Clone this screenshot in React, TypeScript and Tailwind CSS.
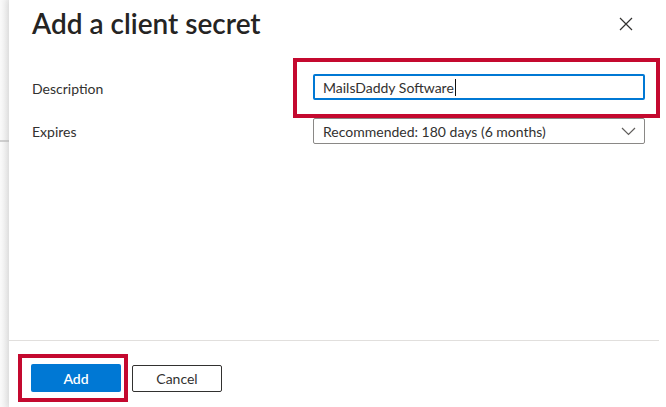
export default function App() {
  return (
    <div
      className="flex h-[407px] w-[666px] overflow-hidden bg-white text-[#323130]"
      style={{ fontFamily: "Lato, 'Noto Sans', sans-serif" }}
    >
      {/* blurred page behind the panel */}
      <div className="flex w-[9px] flex-col bg-gradient-to-r from-[#fafafa] to-[#ececec]">
        <div className="h-[140px]" />
        <div className="h-[2px] bg-[#cfcfcf]" />
      </div>

      <div className="flex flex-1 flex-col shadow-[-2px_0_6px_rgba(0,0,0,0.08)]">
        <div className="flex items-start justify-between pl-[23px] pr-[33px] pt-[5px]">
          <h1 className="text-[28px] font-semibold leading-[36px] text-[#252423]">Add a client secret</h1>
          <svg className="mt-[12px]" width="14" height="14" viewBox="0 0 14 14" fill="none">
            <path d="M1 1L13 13M13 1L1 13" stroke="#323130" strokeWidth="1.2" />
          </svg>
        </div>

        <div className="flex flex-col pl-[23px] pt-[17px]">
          <div className="flex items-center">
            <span className="w-[261px] text-[14px]">Description</span>
            <div className="w-[367px] border-[4px] border-[#c4092f] px-[16px] pb-[14px] pt-[12px]">
              <div className="flex h-[26px] w-[332px] items-center rounded-[2px] border-2 border-[#0078d4] pl-[8px] text-[14px]">
                MailsDaddy Software
                <span className="ml-[1px] h-[17px] w-px bg-[#111]" />
              </div>
            </div>
          </div>
          <div className="flex items-center">
            <span className="w-[281px] text-[14px]">Expires</span>
            <div className="flex h-[26px] w-[332px] items-center justify-between rounded-[2px] border border-[#8a8886] pl-[9px] pr-[8px] text-[14px]">
              <span>Recommended: 180 days (6 months)</span>
              <svg width="15" height="9" viewBox="0 0 15 9" fill="none">
                <path d="M1 1L7.5 7.5L14 1" stroke="#605e5c" strokeWidth="1.2" />
              </svg>
            </div>
          </div>
        </div>

        <div className="flex-1" />

        <div className="mr-[7px] border-t border-[#e1dfdd] pb-[5px] pl-[9px] pt-[13px]">
          <div className="flex items-center gap-[4px]">
            <div className="border-[4px] border-[#c4092f] py-[6px] pl-[9px] pr-[3px]">
              <button className="h-[28px] w-[90px] rounded-[2px] bg-[#0078d4] text-[14px] font-semibold text-white">Add</button>
            </div>
            <button className="h-[27px] w-[90px] rounded-[2px] border border-[#323130] bg-white text-[14px] text-[#323130]">Cancel</button>
          </div>
        </div>
      </div>
    </div>
  );
}
